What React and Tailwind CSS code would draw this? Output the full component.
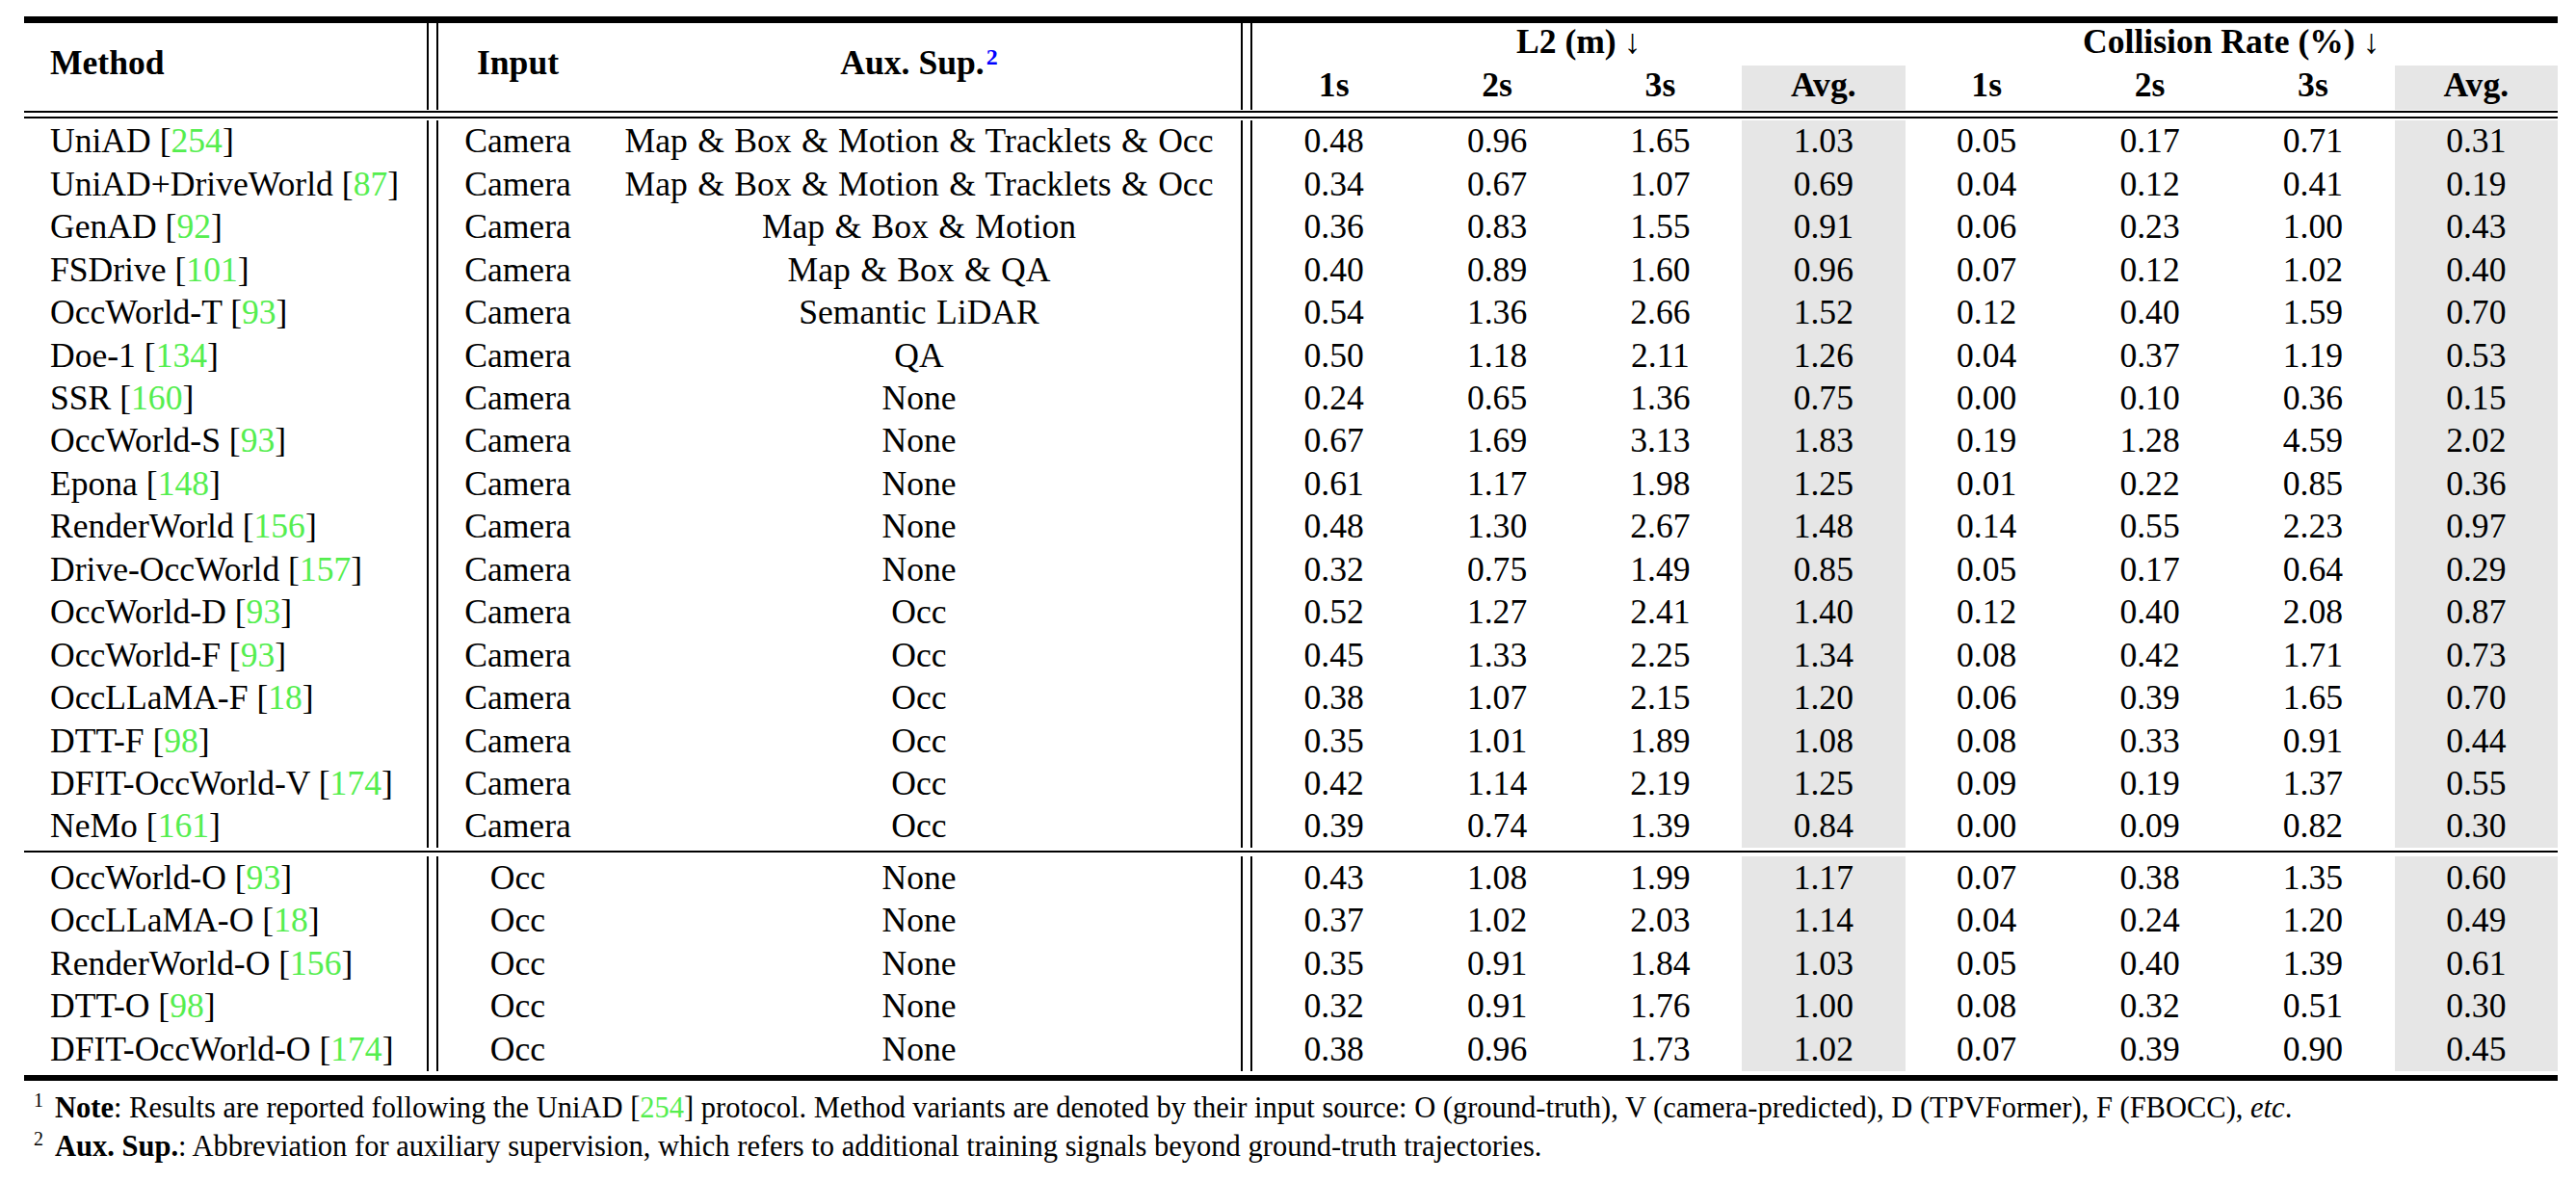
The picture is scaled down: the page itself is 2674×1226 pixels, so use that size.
import React from "react";

const G = ({ children }) => <span className="text-[#55ee4f]">{children}</span>;

const group1 = [
  ["UniAD", "254", "Camera", "Map & Box & Motion & Tracklets & Occ", ["0.48", "0.96", "1.65", "1.03", "0.05", "0.17", "0.71", "0.31"]],
  ["UniAD+DriveWorld", "87", "Camera", "Map & Box & Motion & Tracklets & Occ", ["0.34", "0.67", "1.07", "0.69", "0.04", "0.12", "0.41", "0.19"]],
  ["GenAD", "92", "Camera", "Map & Box & Motion", ["0.36", "0.83", "1.55", "0.91", "0.06", "0.23", "1.00", "0.43"]],
  ["FSDrive", "101", "Camera", "Map & Box & QA", ["0.40", "0.89", "1.60", "0.96", "0.07", "0.12", "1.02", "0.40"]],
  ["OccWorld-T", "93", "Camera", "Semantic LiDAR", ["0.54", "1.36", "2.66", "1.52", "0.12", "0.40", "1.59", "0.70"]],
  ["Doe-1", "134", "Camera", "QA", ["0.50", "1.18", "2.11", "1.26", "0.04", "0.37", "1.19", "0.53"]],
  ["SSR", "160", "Camera", "None", ["0.24", "0.65", "1.36", "0.75", "0.00", "0.10", "0.36", "0.15"]],
  ["OccWorld-S", "93", "Camera", "None", ["0.67", "1.69", "3.13", "1.83", "0.19", "1.28", "4.59", "2.02"]],
  ["Epona", "148", "Camera", "None", ["0.61", "1.17", "1.98", "1.25", "0.01", "0.22", "0.85", "0.36"]],
  ["RenderWorld", "156", "Camera", "None", ["0.48", "1.30", "2.67", "1.48", "0.14", "0.55", "2.23", "0.97"]],
  ["Drive-OccWorld", "157", "Camera", "None", ["0.32", "0.75", "1.49", "0.85", "0.05", "0.17", "0.64", "0.29"]],
  ["OccWorld-D", "93", "Camera", "Occ", ["0.52", "1.27", "2.41", "1.40", "0.12", "0.40", "2.08", "0.87"]],
  ["OccWorld-F", "93", "Camera", "Occ", ["0.45", "1.33", "2.25", "1.34", "0.08", "0.42", "1.71", "0.73"]],
  ["OccLLaMA-F", "18", "Camera", "Occ", ["0.38", "1.07", "2.15", "1.20", "0.06", "0.39", "1.65", "0.70"]],
  ["DTT-F", "98", "Camera", "Occ", ["0.35", "1.01", "1.89", "1.08", "0.08", "0.33", "0.91", "0.44"]],
  ["DFIT-OccWorld-V", "174", "Camera", "Occ", ["0.42", "1.14", "2.19", "1.25", "0.09", "0.19", "1.37", "0.55"]],
  ["NeMo", "161", "Camera", "Occ", ["0.39", "0.74", "1.39", "0.84", "0.00", "0.09", "0.82", "0.30"]],
];

const group2 = [
  ["OccWorld-O", "93", "Occ", "None", ["0.43", "1.08", "1.99", "1.17", "0.07", "0.38", "1.35", "0.60"]],
  ["OccLLaMA-O", "18", "Occ", "None", ["0.37", "1.02", "2.03", "1.14", "0.04", "0.24", "1.20", "0.49"]],
  ["RenderWorld-O", "156", "Occ", "None", ["0.35", "0.91", "1.84", "1.03", "0.05", "0.40", "1.39", "0.61"]],
  ["DTT-O", "98", "Occ", "None", ["0.32", "0.91", "1.76", "1.00", "0.08", "0.32", "0.51", "0.30"]],
  ["DFIT-OccWorld-O", "174", "Occ", "None", ["0.38", "0.96", "1.73", "1.02", "0.07", "0.39", "0.90", "0.45"]],
];

const Bar = () => (
  <div className="w-[12px] shrink-0 self-stretch border-x-2 border-black" />
);

function Row({ r }) {
  const [name, cite, input, aux, vals] = r;
  return (
    <div className="flex h-[44.45px] items-stretch">
      <div className="w-[418px] shrink-0 flex items-center pl-[27px] whitespace-nowrap">
        {name} [<G>{cite}</G>]
      </div>
      <Bar />
      <div className="w-[165px] shrink-0 flex items-center justify-center">{input}</div>
      <div className="w-[668px] shrink-0 flex items-center justify-center whitespace-nowrap [word-spacing:1.5px]">{aux}</div>
      <Bar />
      {vals.map((v, i) => (
        <div
          key={i}
          className={
            "flex-1 flex items-center justify-center " +
            (i === 3 || i === 7 ? "bg-[#e6e6e6]" : "")
          }
        >
          {v}
        </div>
      ))}
    </div>
  );
}

export default function App() {
  return (
    <div
      className="w-[2674px] h-[1226px] bg-white text-black overflow-hidden"
      style={{ fontFamily: '"Liberation Serif", "Times New Roman", serif' }}
    >
      <div className="ml-[25px] w-[2630px] pt-[17px] text-[35.6px] leading-none">
        <div className="h-[7px] bg-black" />
        {/* header */}
        <div className="flex h-[90px] font-bold">
          <div className="w-[418px] shrink-0 flex items-center pl-[27px] pb-[7px]">Method</div>
          <Bar />
          <div className="w-[165px] shrink-0 flex items-center justify-center pb-[7px]">Input</div>
          <div className="w-[668px] shrink-0 flex items-center justify-center pb-[7px]">
            <span>
              Aux. Sup.
              <sup className="text-[#0000ff] text-[24px] relative -top-[10px] align-baseline ml-[2px]">2</sup>
            </span>
          </div>
          <Bar />
          <div className="flex-1 flex flex-col">
            <div className="h-[44px] flex pb-[5px]">
              <div className="flex-1 flex items-center justify-center">
                L2 (m) <span className="font-normal ml-[8px]">↓</span>
              </div>
              <div className="flex-1 flex items-center justify-center">
                Collision Rate (%) <span className="font-normal ml-[8px]">↓</span>
              </div>
            </div>
            <div className="flex-1 flex">
              {["1s", "2s", "3s", "Avg.", "1s", "2s", "3s", "Avg."].map((h, i) => (
                <div
                  key={i}
                  className={
                    "flex-1 flex items-center justify-center pb-[4px] " +
                    (i === 3 || i === 7 ? "bg-[#e6e6e6]" : "")
                  }
                >
                  {h}
                </div>
              ))}
            </div>
          </div>
        </div>
        <div className="mt-[1px] h-[2px] bg-black" />
        <div className="mt-[4px] h-[2px] bg-black" />
        <div className="h-[2px]" />
        {group1.map((r, i) => (
          <Row key={i} r={r} />
        ))}
        <div className="mt-[3px] h-[2px] bg-black" />
        <div className="h-[4px]" />
        {group2.map((r, i) => (
          <Row key={i} r={r} />
        ))}
        <div className="mt-[4px] h-[6px] bg-black" />
        {/* footnotes */}
        <div className="pt-[10px] pl-[10px] text-[30.5px] leading-[37.5px] whitespace-nowrap">
          <div className="flex items-baseline">
            <span className="w-[22px] shrink-0 text-[20px] relative -top-[11px]">1</span>
            <span>
              <b>Note</b>: Results are reported following the UniAD [<G>254</G>] protocol. Method variants are denoted by their input source: O (ground-truth), V (camera-predicted), D (TPVFormer), F (FBOCC), <i>etc</i>.
            </span>
          </div>
          <div className="flex items-baseline">
            <span className="w-[22px] shrink-0 text-[20px] relative -top-[11px]">2</span>
            <span>
              <b>Aux. Sup.</b>: Abbreviation for auxiliary supervision, which refers to additional training signals beyond ground-truth trajectories.
            </span>
          </div>
        </div>
      </div>
    </div>
  );
}
